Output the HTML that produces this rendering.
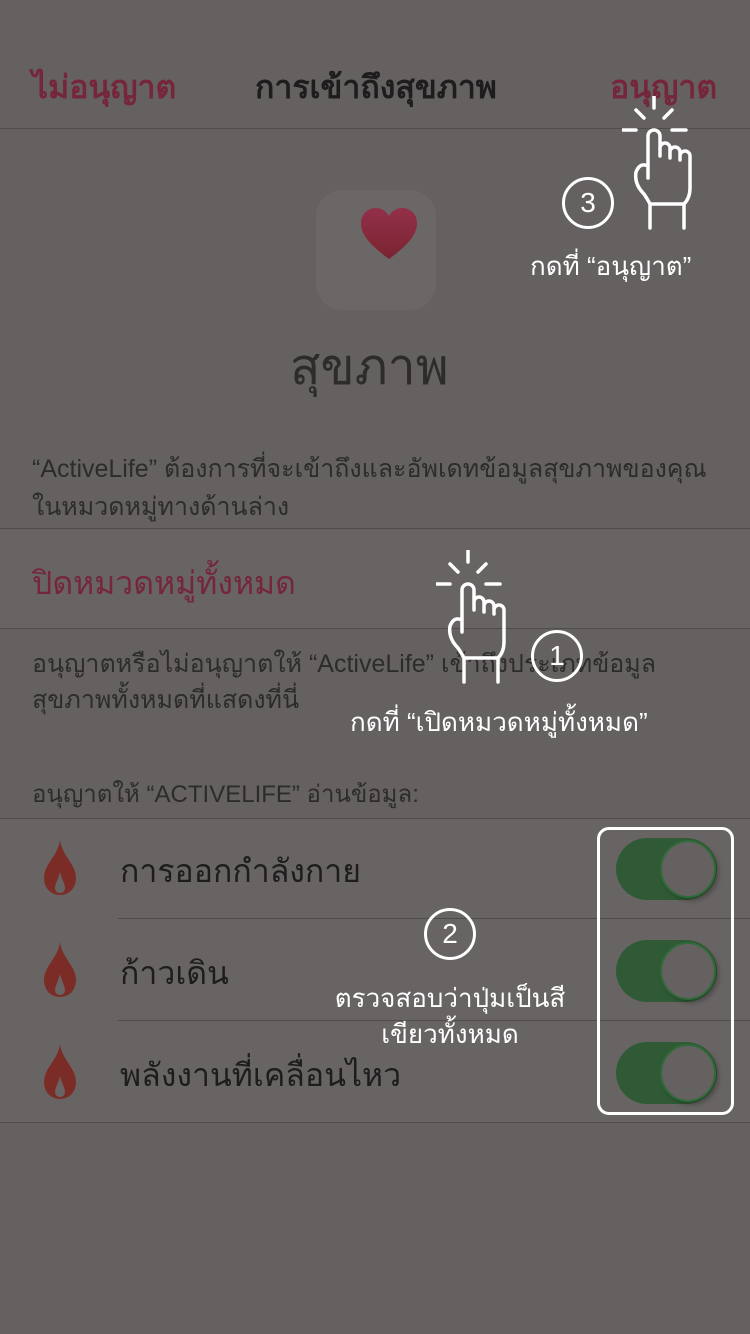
<!DOCTYPE html>
<html><head><meta charset="utf-8"><style>
body{margin:0;width:750px;height:1334px;background:#646160;font-family:"Liberation Sans","Noto Sans CJK SC",sans-serif;position:relative;overflow:hidden}
.a{position:absolute;white-space:nowrap}
.line{position:absolute;left:0;width:750px;height:1px;background:#4f4c4b}
.row{position:absolute;left:0;width:750px;background:#676463}
.tg{position:absolute;left:616px;width:101px;height:62px;border-radius:31px;background:#2f5a35}
.tg:after{content:"";position:absolute;right:1px;top:2px;width:56px;height:58px;border-radius:50%;background:#646160;border:2px solid #2f6a38;box-sizing:border-box;box-shadow:3px 3px 4px rgba(0,0,0,.25)}
.circ{position:absolute;width:46px;height:46px;border:3px solid #fff;border-radius:50%;color:#fff;font-size:28px;text-align:center;line-height:46px;box-sizing:content-box}
.w{color:#fff;font-size:26px}
</style></head><body>
<svg width="0" height="0" style="position:absolute"><defs>
<g id="hand" fill="none" stroke="#fff" stroke-width="3.5" stroke-linecap="round" stroke-linejoin="round">
<path d="M14 14 L22 22 M32 0 V12 M50 14 L42 22 M0 34 H14 M50 34 H64"/>
<path d="M26 82 V40 a6 6 0 0 1 12 0 V60 M38 52 a5 5 0 0 1 10 0 V62 M48 56 a5 5 0 0 1 10 0 V64 M58 60 a5 5 0 0 1 10 0 V92 Q68 102 62 108 L62 132 M26 70 Q18 66 14 76 Q12 88 22 98 Q26 104 28 108 L28 132 M28 108 H62"/>
</g>
<linearGradient id="hg" x1="0" y1="0" x2="0" y2="1"><stop offset="0" stop-color="#93304a"/><stop offset="1" stop-color="#7a2430"/></linearGradient>
</defs></svg>

<div class="a" style="left:32px;top:62px;font-size:32px;color:#75263a;font-weight:bold">ไม่อนุญาต</div>
<div class="a" style="left:255px;top:62px;font-size:32px;color:#1e1c1c;font-weight:bold">การเข้าถึงสุขภาพ</div>
<div class="a" style="left:610px;top:62px;font-size:32px;color:#75263a;font-weight:bold">อนุญาต</div>
<div class="line" style="top:128px"></div>

<div class="a" style="left:316px;top:190px;width:120px;height:120px;border-radius:26px;background:#6a6766"></div>
<svg class="a" style="left:359px;top:207px" width="60" height="54" viewBox="0 0 60 54"><path d="M30 52 C8 36 2 26 2 16 C2 7 9 1 17 1 C23 1 27 4 30 9 C33 4 37 1 43 1 C51 1 58 7 58 16 C58 26 52 36 30 52Z" fill="url(#hg)"/></svg>
<div class="a" style="left:290px;top:328px;font-size:50px;color:#2e2b2b">สุขภาพ</div>

<div class="a" style="left:32px;top:450px;font-size:25px;color:#2e2b2b;line-height:38px">“ActiveLife” ต้องการที่จะเข้าถึงและอัพเดทข้อมูลสุขภาพของคุณ<br>ในหมวดหมู่ทางด้านล่าง</div>

<div class="line" style="top:528px"></div>
<div class="row" style="top:529px;height:99px"></div>
<div class="a" style="left:32px;top:558px;font-size:32px;color:#75263a">ปิดหมวดหมู่ทั้งหมด</div>
<div class="line" style="top:628px"></div>

<div class="a" style="left:32px;top:646px;font-size:25px;color:#2e2b2b;line-height:36px">อนุญาตหรือไม่อนุญาตให้ “ActiveLife” เข้าถึงประเภทข้อมูล<br>สุขภาพทั้งหมดที่แสดงที่นี่</div>
<div class="a" style="left:32px;top:774px;font-size:24px;color:#2e2b2b">อนุญาตให้ “ACTIVELIFE” อ่านข้อมูล:</div>

<div class="line" style="top:818px"></div>
<div class="row" style="top:819px;height:303px"></div>
<div class="line" style="top:918px;left:118px"></div>
<div class="line" style="top:1020px;left:118px"></div>
<div class="line" style="top:1122px"></div>

<svg class="a" style="left:42px;top:840px" width="36" height="56" viewBox="0 0 36 56"><path d="M18 0 C20 16 34 24 34 38 C34 48 27 55 18 55 C9 55 2 48 2 38 C2 24 16 16 18 0Z M18 32 C16 40 13 44 13 48 C13 51 15 53 18 53 C21 53 23 51 23 48 C23 44 20 40 18 32Z" fill="#7c2c26" fill-rule="evenodd"/></svg>
<svg class="a" style="left:42px;top:942px" width="36" height="56" viewBox="0 0 36 56"><path d="M18 0 C20 16 34 24 34 38 C34 48 27 55 18 55 C9 55 2 48 2 38 C2 24 16 16 18 0Z M18 32 C16 40 13 44 13 48 C13 51 15 53 18 53 C21 53 23 51 23 48 C23 44 20 40 18 32Z" fill="#7c2c26" fill-rule="evenodd"/></svg>
<svg class="a" style="left:42px;top:1044px" width="36" height="56" viewBox="0 0 36 56"><path d="M18 0 C20 16 34 24 34 38 C34 48 27 55 18 55 C9 55 2 48 2 38 C2 24 16 16 18 0Z M18 32 C16 40 13 44 13 48 C13 51 15 53 18 53 C21 53 23 51 23 48 C23 44 20 40 18 32Z" fill="#7c2c26" fill-rule="evenodd"/></svg>

<div class="a" style="left:120px;top:846px;font-size:32px;color:#1e1c1c">การออกกำลังกาย</div>
<div class="a" style="left:120px;top:948px;font-size:32px;color:#1e1c1c">ก้าวเดิน</div>
<div class="a" style="left:120px;top:1050px;font-size:32px;color:#1e1c1c">พลังงานที่เคลื่อนไหว</div>

<div class="tg" style="top:838px"></div>
<div class="tg" style="top:940px"></div>
<div class="tg" style="top:1042px"></div>
<div class="a" style="left:597px;top:827px;width:131px;height:282px;border:3px solid #fff;border-radius:12px"></div>

<svg class="a" style="left:622px;top:96px" width="72" height="136"><use href="#hand"/></svg>
<div class="circ" style="left:562px;top:177px">3</div>
<div class="a w" style="left:530px;top:246px">กดที่ “อนุญาต”</div>

<svg class="a" style="left:436px;top:550px" width="72" height="136"><use href="#hand"/></svg>
<div class="circ" style="left:531px;top:630px">1</div>
<div class="a w" style="left:350px;top:702px">กดที่ “เปิดหมวดหมู่ทั้งหมด”</div>

<div class="circ" style="left:424px;top:908px">2</div>
<div class="a w" style="left:330px;top:980px;width:240px;text-align:center;line-height:36px">ตรวจสอบว่าปุ่มเป็นสี<br>เขียวทั้งหมด</div>
</body></html>
